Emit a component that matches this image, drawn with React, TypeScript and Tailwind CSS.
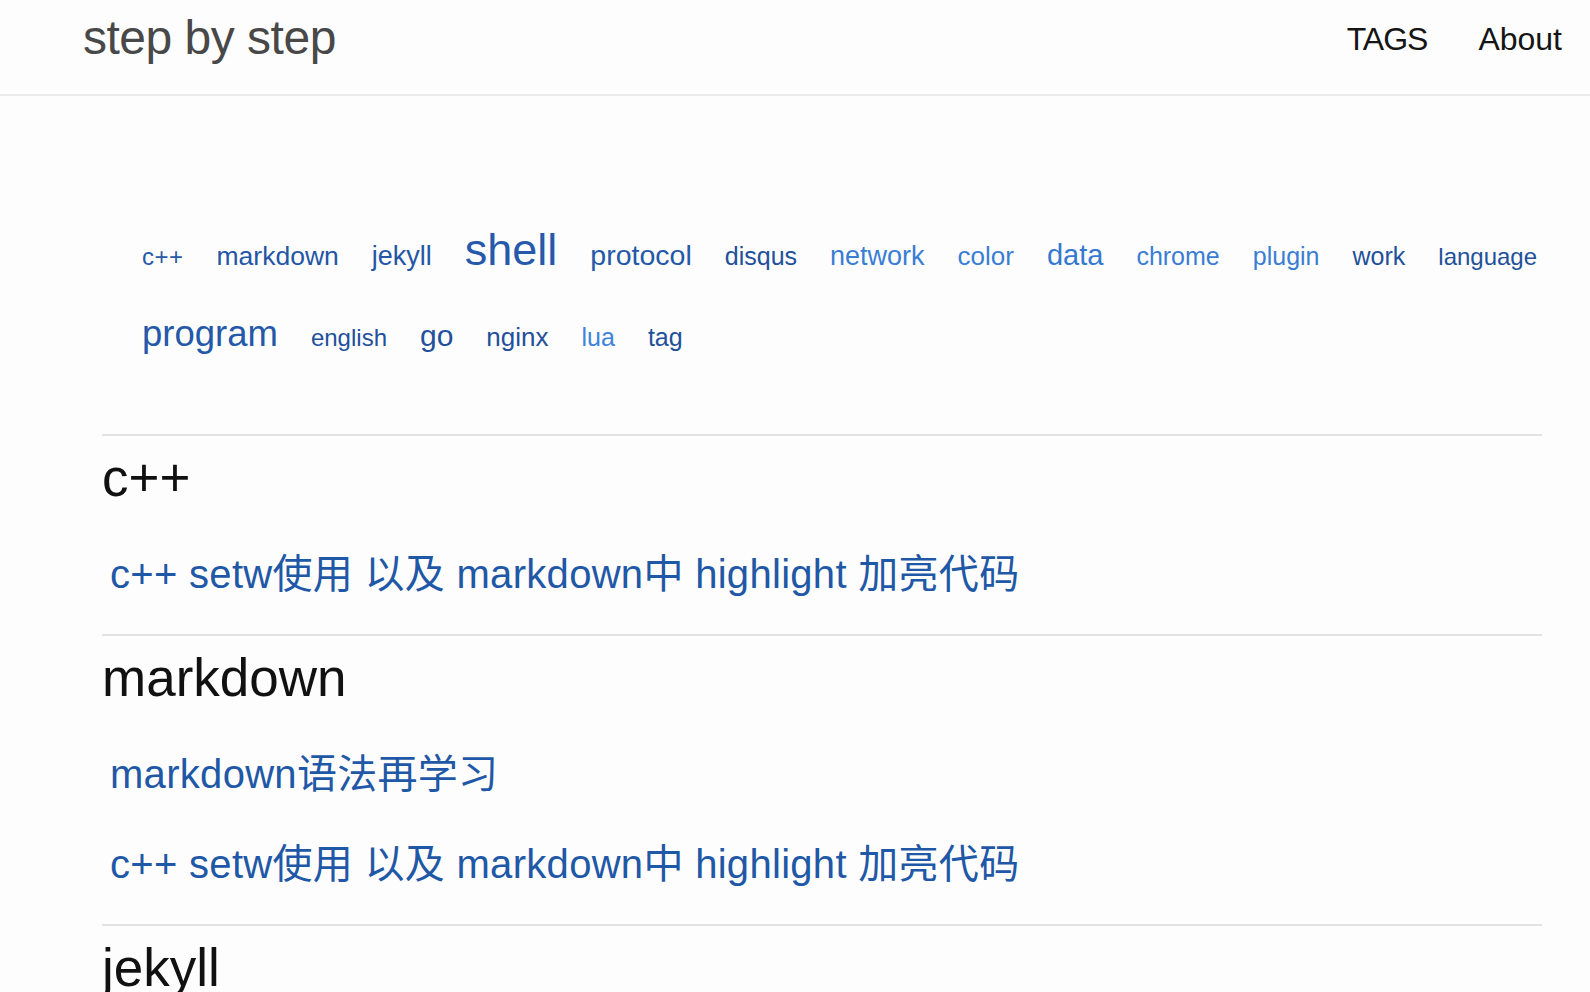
const sans = "font-['Liberation_Sans','Noto_Sans_CJK_SC',sans-serif]";

const tags: { name: string; cls: string }[] = [
  { name: "c++", cls: "text-[24px] tracking-[0.5px] text-[#2859a6]" },
  { name: "markdown", cls: "text-[26.5px] text-[#2456a5]" },
  { name: "jekyll", cls: "text-[27px] text-[#2456a5]" },
  { name: "shell", cls: "text-[45px] text-[#2659ab]" },
  { name: "protocol", cls: "text-[28.5px] text-[#2458a8]" },
  { name: "disqus", cls: "text-[25px] text-[#22509a]" },
  { name: "network", cls: "text-[27px] text-[#3a7dd4]" },
  { name: "color", cls: "text-[26px] text-[#3a7dd4]" },
  { name: "data", cls: "text-[29px] text-[#3578d0]" },
  { name: "chrome", cls: "text-[25px] text-[#3a7dd4]" },
  { name: "plugin", cls: "text-[25px] text-[#3a7dd4]" },
  { name: "work", cls: "text-[25px] text-[#22509a]" },
  { name: "language", cls: "text-[24px] text-[#22509a]" },
  { name: "program", cls: "text-[36.5px] text-[#2458a8]" },
  { name: "english", cls: "text-[24px] text-[#22509a]" },
  { name: "go", cls: "text-[30px] text-[#22509a]" },
  { name: "nginx", cls: "text-[26px] text-[#22509a]" },
  { name: "lua", cls: "text-[25px] text-[#3f83dc]" },
  { name: "tag", cls: "text-[25px] text-[#22509a]" },
];

const setw = "c++ setw使用 以及 markdown中 highlight 加亮代码";

const sections: { tag: string; posts: string[] }[] = [
  { tag: "c++", posts: [setw] },
  { tag: "markdown", posts: ["markdown语法再学习", setw] },
  { tag: "jekyll", posts: ["jekyll 使用 tag"] },
];

export default function App() {
  return (
    <div className={`h-screen overflow-hidden bg-[#fdfdfd] ${sans}`}>
      <header className="flex h-[96px] justify-between border-b-2 border-[#ebebeb] pl-[83px] pr-[28px]">
        <a href="#" className="mt-[14px] text-[48px] leading-none tracking-[-0.5px] text-[#484848]">
          step by step
        </a>
        <nav className="mt-[23px] flex gap-[51px] text-[32px] leading-none text-[#151515]">
          <a href="#" className="tracking-[-1px]">TAGS</a>
          <a href="#">About</a>
        </nav>
      </header>

      <main className="pt-[131px]">
        <div className="flex flex-wrap items-baseline gap-x-[33px] gap-y-[44px] pl-[142px] pr-[20px]">
          {tags.map((t) => (
            <a key={t.name} href="#" className={`leading-none ${t.cls}`}>
              {t.name}
            </a>
          ))}
        </div>

        <div className="ml-[102px] mr-[48px] mt-[81px]">
          {sections.map((s) => (
            <section key={s.tag} className="border-t-2 border-[#e2e2e2] pb-[35px] pt-[15px]">
              <h2 className="text-[53px] leading-none text-[#111]">{s.tag}</h2>
              <ul className="mt-[45px] flex flex-col gap-[40px] pl-[8px]">
                {s.posts.map((p, i) => (
                  <li key={i} className="text-[40px] leading-[50px] tracking-[0.3px]">
                    <a href="#" className="text-[#1f58a6]">
                      {p}
                    </a>
                  </li>
                ))}
              </ul>
            </section>
          ))}
        </div>
      </main>
    </div>
  );
}
